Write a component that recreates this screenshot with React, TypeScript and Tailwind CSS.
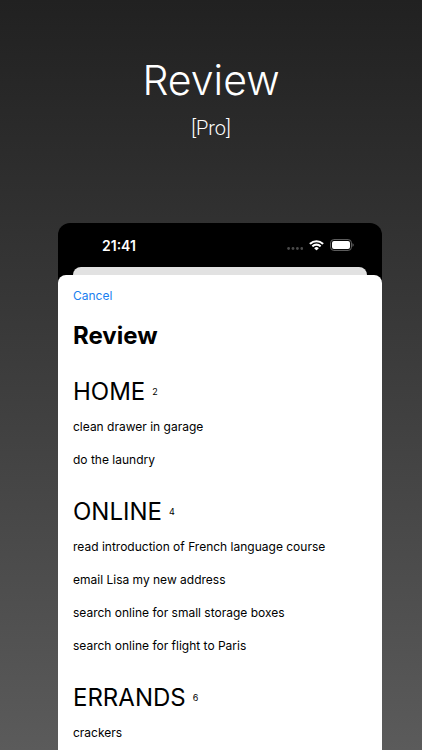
import React from 'react';

type Group = {
  name: string;
  count: number;
  items: string[];
};

const groups: Group[] = [
  { name: 'HOME', count: 2, items: ['clean drawer in garage', 'do the laundry'] },
  {
    name: 'ONLINE',
    count: 4,
    items: [
      'read introduction of French language course',
      'email Lisa my new address',
      'search online for small storage boxes',
      'search online for flight to Paris',
    ],
  },
  { name: 'ERRANDS', count: 6, items: ['crackers'] },
];

function StatusBar() {
  return (
    <div className="flex h-11 items-center justify-between pl-11 pr-7 text-white">
      <span className="text-[14px] font-semibold">21:41</span>
      <div className="flex items-center gap-1.5">
        <svg width="16" height="12" viewBox="0 0 16 12" fill="#4a4a4a" aria-hidden="true">
          <circle cx="1.6" cy="9.5" r="1.4" />
          <circle cx="6" cy="9.5" r="1.4" />
          <circle cx="10.4" cy="9.5" r="1.4" />
          <circle cx="14.8" cy="9.5" r="1.4" />
        </svg>
        <svg width="15" height="11" viewBox="0 0 17 12" fill="#fff" aria-hidden="true">
          <path d="M8.5 2.4c2.4 0 4.6.9 6.3 2.5.1.1.3.1.5 0l1.2-1.2c.1-.1.1-.4 0-.5a11.6 11.6 0 0 0-16 0c-.1.1-.1.4 0 .5l1.2 1.2c.2.1.4.1.5 0a9.1 9.1 0 0 1 6.3-2.5z" />
          <path d="M8.5 6.3c1.3 0 2.6.5 3.6 1.4.1.1.3.1.5 0l1.2-1.3c.1-.1.1-.3 0-.5a7.8 7.8 0 0 0-10.6 0c-.1.2-.1.4 0 .5l1.2 1.3c.2.1.4.1.5 0 1-.9 2.3-1.4 3.6-1.4z" />
          <path d="M10.9 9.3c.1-.1.1-.4 0-.5a3.8 3.8 0 0 0-4.8 0c-.1.1-.1.4 0 .5l2.2 2.2c.1.1.3.1.4 0z" />
        </svg>
        <svg width="24" height="12" viewBox="0 0 24 12" fill="none" aria-hidden="true">
          <rect x="0.6" y="0.6" width="20.8" height="10.8" rx="3.2" stroke="#666" />
          <rect x="2" y="2" width="18" height="8" rx="2" fill="#fff" />
          <path d="M22.5 4.2v3.6c.7-.3 1.2-1 1.2-1.8s-.5-1.5-1.2-1.8z" fill="#666" />
        </svg>
      </div>
    </div>
  );
}

export default function App() {
  return (
    <div className="flex h-screen flex-col overflow-hidden bg-linear-to-b from-[#212121] to-[#5b5b5b] font-['Inter',sans-serif]">
      <header className="pt-14 text-center text-white">
        <h1 className="text-[41px] font-light leading-12">Review</h1>
        <p className="mt-3 font-['Roboto',sans-serif] text-xl font-light leading-6">[Pro]</p>
      </header>

      <main className="ml-[58px] mr-10 mt-[83px] grow rounded-t-xl bg-black">
        <StatusBar />
        <div className="mx-[15px] h-2 rounded-t-lg bg-[#e2e2e2]" />
        <div className="min-h-full rounded-t-lg bg-white px-[15px] pt-[11px] text-black">
          <button type="button" className="block text-[12px] leading-5 text-[#1a80f0]">
            Cancel
          </button>
          <h2 className="mt-3 text-[24px] font-bold leading-9">Review</h2>

          <div className="mt-[19px] flex flex-col gap-[17px]">
            {groups.map((group) => (
              <section key={group.name}>
                <h3 className="flex h-[37px] items-center gap-[7px] text-[24px]">
                  {group.name}
                  <span className="text-[9px]">{group.count}</span>
                </h3>
                <ul>
                  {group.items.map((item) => (
                    <li key={item} className="text-[12px] leading-[33px]">
                      {item}
                    </li>
                  ))}
                </ul>
              </section>
            ))}
          </div>
        </div>
      </main>
    </div>
  );
}
